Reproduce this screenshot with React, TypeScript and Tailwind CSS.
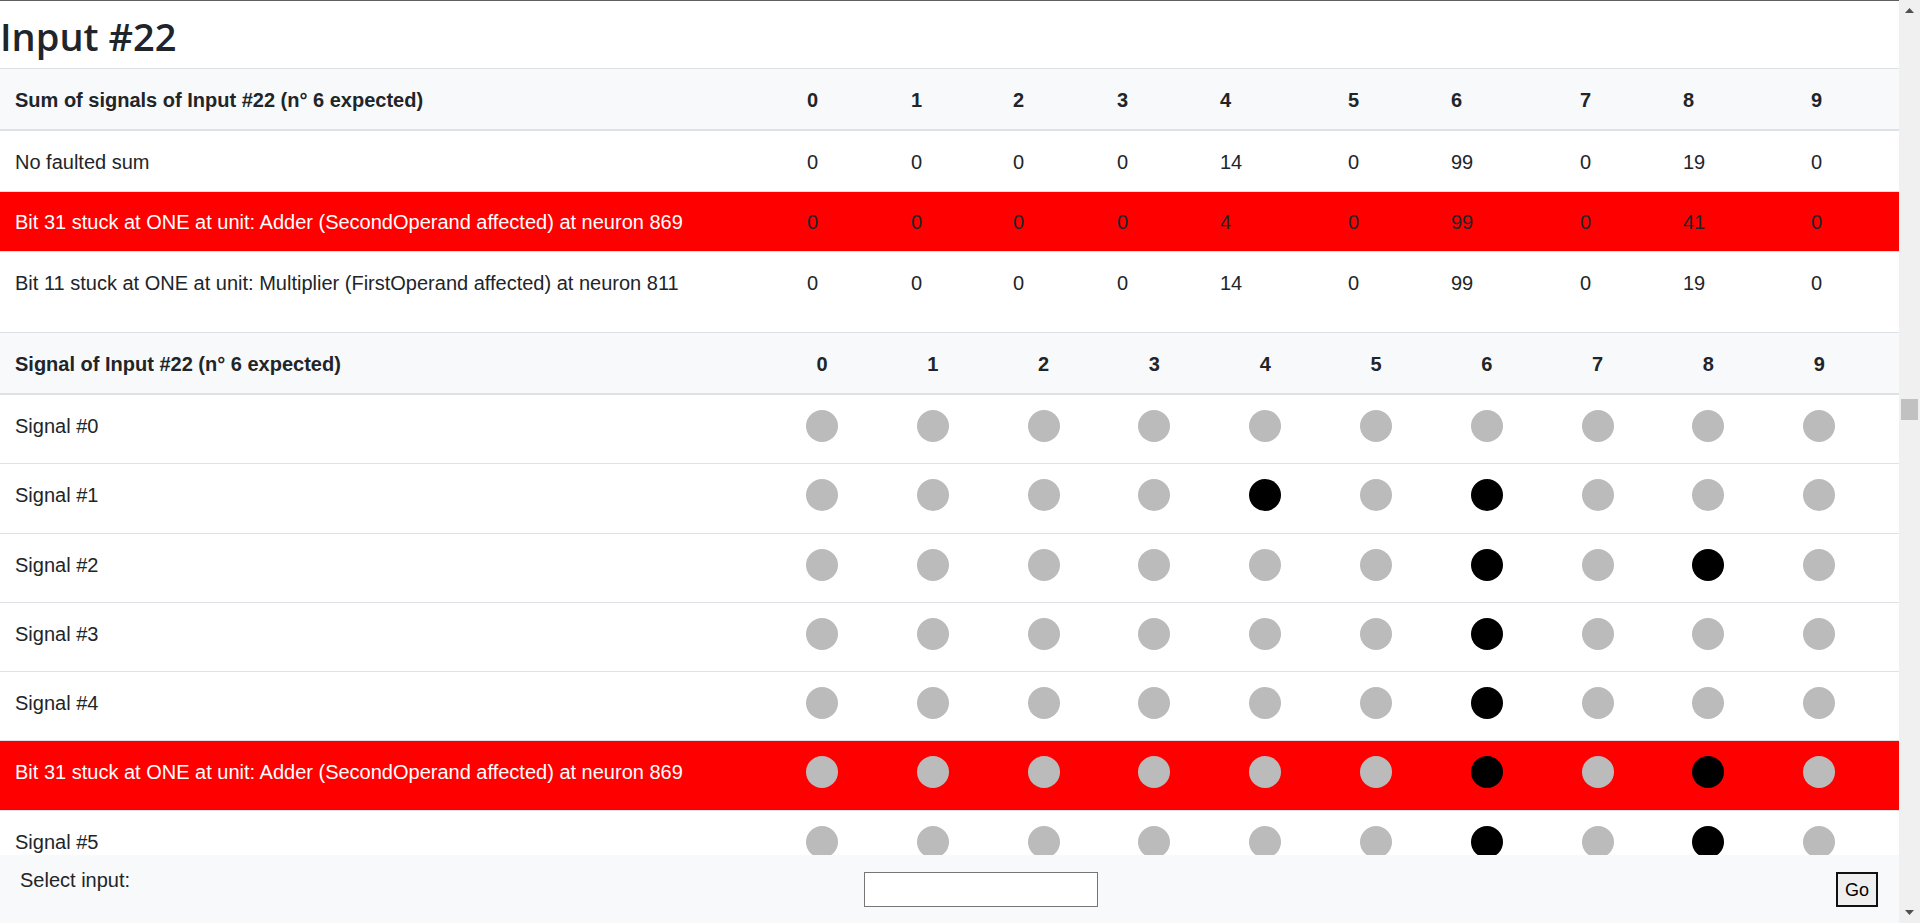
import React from 'react';

const sums = [
    { label: 'No faulted sum', values: [0, 0, 0, 0, 14, 0, 99, 0, 19, 0], faulted: false },
    {
        label: 'Bit 31 stuck at ONE at unit: Adder (SecondOperand affected) at neuron 869',
        values: [0, 0, 0, 0, 4, 0, 99, 0, 41, 0],
        faulted: true,
    },
    {
        label: 'Bit 11 stuck at ONE at unit: Multiplier (FirstOperand affected) at neuron 811',
        values: [0, 0, 0, 0, 14, 0, 99, 0, 19, 0],
        faulted: false,
    },
];

const signals = [
    { label: 'Signal #0', on: [] as number[], faulted: false },
    { label: 'Signal #1', on: [4, 6], faulted: false },
    { label: 'Signal #2', on: [6, 8], faulted: false },
    { label: 'Signal #3', on: [6], faulted: false },
    { label: 'Signal #4', on: [6], faulted: false },
    { label: 'Bit 31 stuck at ONE at unit: Adder (SecondOperand affected) at neuron 869', on: [6, 8], faulted: true },
    { label: 'Signal #5', on: [6, 8], faulted: false },
    { label: 'Signal #6', on: [6], faulted: false },
];

const digits = [0, 1, 2, 3, 4, 5, 6, 7, 8, 9];

// column widths copied from the auto table layout
const sumGrid =
    'grid grid-cols-[792px_104px_102px_104px_103px_128px_103px_129px_103px_128px_103px]';
const signalGrid = 'grid grid-cols-[791px_repeat(10,minmax(0,1fr))]';

function SumTable() {
    return (
        <div className="mb-[20px]">
            <div className={`${sumGrid} h-[63px] items-center pt-[2px] bg-[#f8f9fa] border-t border-b-2 border-[#dee2e6] font-bold`}>
                <div className="px-[15px]">Sum of signals of Input #22 (n° 6 expected)</div>
                {digits.map(d => (
                    <div key={d} className="px-[15px]">{d}</div>
                ))}
            </div>
            {sums.map((row, i) => (
                <div
                    key={i}
                    className={`${sumGrid} items-center pt-[1px] ${i === 0 ? 'h-[61px]' : 'h-[60px]'} ${
                        i < sums.length - 1 ? 'border-b border-[#dee2e6]' : ''
                    } ${row.faulted ? 'bg-[#ff0000]' : ''}`}
                >
                    <div className={`px-[15px] ${row.faulted ? 'text-white' : ''}`}>{row.label}</div>
                    {row.values.map((v, j) => (
                        <div key={j} className="px-[15px]">{v}</div>
                    ))}
                </div>
            ))}
        </div>
    );
}

function SignalTable() {
    return (
        <div>
            <div className={`${signalGrid} h-[63px] items-center pt-[2px] bg-[#f8f9fa] border-t border-b-2 border-[#dee2e6] font-bold`}>
                <div className="px-[15px]">Signal of Input #22 (n° 6 expected)</div>
                {digits.map(d => (
                    <div key={d} className="px-[15px]">
                        <div className="w-8 text-center">{d}</div>
                    </div>
                ))}
            </div>
            {signals.map((row, i) => (
                <div
                    key={i}
                    className={`${signalGrid} h-[69.3px] items-start border-b border-[#dee2e6] ${
                        row.faulted ? 'bg-[#ff0000]' : ''
                    }`}
                >
                    <div className={`px-[15px] pt-[16px] ${row.faulted ? 'text-white' : ''}`}>{row.label}</div>
                    {digits.map(d => (
                        <div key={d} className="px-[15px] pt-[15px]">
                            <span
                                className={`block size-8 rounded-full ${
                                    row.on.includes(d) ? 'bg-black' : 'bg-[#bbbbbb]'
                                }`}
                            />
                        </div>
                    ))}
                </div>
            ))}
        </div>
    );
}

function Footer() {
    return (
        <div className="absolute bottom-0 left-0 right-0 h-[68px] bg-[#f8f9fa] flex items-start">
            <div className="w-[864px] pl-[20px] pt-[10px]">Select input:</div>
            <input
                type="text"
                className="mt-[17px] w-[234px] h-[35px] bg-white border border-[#767676] px-1 text-[18px] outline-none"
            />
            <button
                type="button"
                className="ml-auto mr-[21px] mt-[17px] w-[42px] h-[35px] bg-[#efefef] border-2 border-[#111] text-[18px] leading-none text-black"
            >
                Go
            </button>
        </div>
    );
}

function Scrollbar() {
    return (
        <div className="w-[21px] h-full bg-[#f0f0f0] flex flex-col">
            <div className="h-[21px] flex items-center justify-center">
                <svg width="9" height="5" viewBox="0 0 9 5">
                    <polygon points="0,5 4.5,0 9,5" fill="#505050" />
                </svg>
            </div>
            <div className="flex-1">
                <div className="mt-[378px] mx-[2px] h-[21px] bg-[#c1c1c1]" />
            </div>
            <div className="h-[21px] flex items-center justify-center">
                <svg width="9" height="5" viewBox="0 0 9 5">
                    <polygon points="0,0 4.5,5 9,0" fill="#505050" />
                </svg>
            </div>
        </div>
    );
}

export default function App() {
    return (
        <div className="w-[1920px] h-[923px] flex overflow-hidden bg-white text-[#212529] text-[20px] leading-[30px] font-['Liberation_Sans',Arial,sans-serif]">
            <div className="flex-1 relative overflow-hidden border-t border-[#5f5f5f]">
                <h1 className="mt-[11px] mb-[8px] text-[38px] leading-[48px] font-semibold font-['Open_Sans',sans-serif]">
                    Input #22
                </h1>
                <SumTable />
                <SignalTable />
                <Footer />
            </div>
            <Scrollbar />
        </div>
    );
}
